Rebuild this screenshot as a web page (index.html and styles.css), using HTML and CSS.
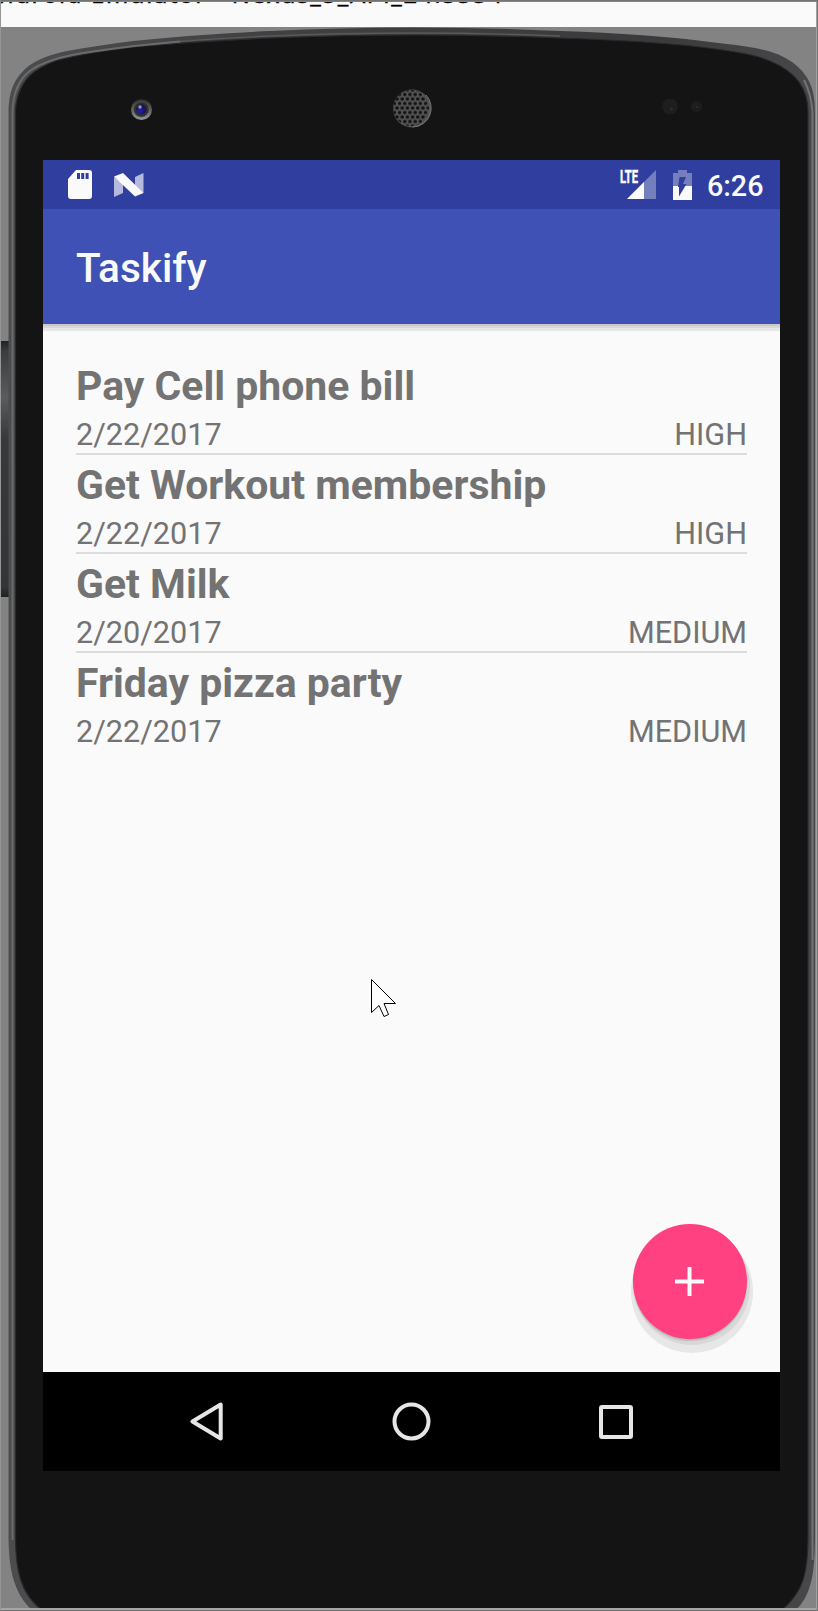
FILE: index.html
```html
<!DOCTYPE html>
<html lang="en">
<head>
<meta charset="utf-8">
<title>Taskify</title>
<link rel="stylesheet" href="styles.css">
</head>
<body>
<div class="window">
  <header class="titlebar">
    <svg width="816" height="25" viewBox="1 2 816 25"><text class="window-title" x="-18" y="3" textLength="520">Android Emulator - Nexus_5_API_24:5554</text></svg>
  </header>
  <main class="device">
    <svg class="shell" width="818" height="1584" viewBox="0 27 818 1584" aria-hidden="true">
      <defs>
        <linearGradient id="rim" x1="0" x2="1" y1="0" y2="0">
          <stop offset="0" stop-color="#4b4c4e"/><stop offset=".3" stop-color="#414143"/><stop offset=".8" stop-color="#3a3a3c"/><stop offset="1" stop-color="#48484b"/>
        </linearGradient>
        <linearGradient id="key" x1="0" x2="0" y1="0" y2="1">
          <stop offset="0" stop-color="#222"/><stop offset=".04" stop-color="#3b3c3d"/><stop offset=".22" stop-color="#5a5b5c"/><stop offset=".38" stop-color="#383939"/><stop offset=".96" stop-color="#343535"/><stop offset="1" stop-color="#202020"/>
        </linearGradient>
        <linearGradient id="lens" x1="0" x2="0" y1="0" y2="1"><stop offset="0" stop-color="#292929"/><stop offset="1" stop-color="#999"/></linearGradient>
        <pattern id="mesh" width="5.2" height="9" patternUnits="userSpaceOnUse" patternTransform="translate(410 103.5)">
          <circle cx="2.6" cy="4.5" r="1.8" fill="#111"/><circle cx="0" cy="0" r="1.8" fill="#111"/><circle cx="5.2" cy="0" r="1.8" fill="#111"/><circle cx="0" cy="9" r="1.8" fill="#111"/><circle cx="5.2" cy="9" r="1.8" fill="#111"/>
        </pattern>
      </defs>
      <rect x="1" y="341" width="9" height="256" fill="url(#key)"/>
      <path fill="url(#rim)" d="M8.500 1535V112C9 88 16 78 25 69C36 59 52 54 67 51C88 47 110 44 133 41Q200 34 270 31Q412 24 560 31Q650 34 710 42C755 47 775 50 792 62C808 74 815 87 815 112V1535C815 1575 811 1596 795 1611H33C14 1594 8.500 1570 8.500 1535Z"/>
      <path fill="#141414" stroke="#2a2a2c" stroke-width="1.2" d="M15.500 1535V110C17 90 25 79 34 72C44 65 56 60 67 58C88 53 110 50 133 47Q200 41 270 38Q412 32 560 38Q650 41 700 47C740 52 756 55 770 61C796 72 808 88 808 112V1535C808 1575 803 1592 781 1611H43C20 1594 15.500 1570 15.500 1535Z"/>
      <path fill="none" stroke="#6a6b6d" stroke-width="2" d="M12.500 1540V112C13 90 20 78 31 70C43 62 57 58 72 55C105 49 140 45 180 41.500"/>
      <path fill="none" stroke="#59595b" stroke-width="1.3" d="M180 41.500Q230 37.500 270 36Q412 30 560 36"/>
      <path fill="none" stroke="#737376" stroke-width="2" d="M812.500 1560V112Q811 93 804 80"/>
      <circle cx="141.500" cy="109.500" r="10.500" fill="url(#lens)"/>
      <circle cx="141.300" cy="109.300" r="7.800" fill="#303030" stroke="#666" stroke-width=".6"/>
      <circle cx="141.300" cy="109.300" r="5" fill="#171753"/><circle cx="140" cy="111" r="3" fill="#1e1ba8"/><circle cx="140" cy="107" r="1.700" fill="#9a9aae"/>
      <circle cx="412" cy="108.500" r="19" fill="#555"/>
      <circle cx="411" cy="108" r="18" fill="url(#mesh)"/>
      <path d="M426 95A19 19 0 0 1 413 127" fill="none" stroke="#777" stroke-width="1"/>
      <circle cx="670" cy="106.500" r="8" fill="#1e1e1e"/><circle cx="696.500" cy="106.500" r="5.500" fill="#1d1d1d"/>
      <circle cx="671.500" cy="109" r="1.200" fill="#3c2e2e"/><circle cx="697" cy="107" r="1" fill="#303030"/>
    </svg>
    <section class="screen">
      <div class="statusbar">
        <svg width="24" height="30" viewBox="0 0 24 30"><path fill="#fafafa" d="M8 0H21Q24 0 24 3V26Q24 29 21 29H3Q0 29 0 26V9Z"/><path fill="#303f9f" d="M9 3h3v6H9zM13.200 3h3v6h-3zM17.600 3h3v6h-3z"/></svg>
        <svg class="nougat" width="30" height="24" viewBox="0 0 30 24"><path fill="#b4bade" d="M0 4L9 10V20L0 24ZM21 4L29.500 0V20L21 15Z"/><path fill="#fafafa" d="M0 3.500L9 0L29.500 20L21 23.500Z"/></svg>
        <svg class="signal" width="38" height="30" viewBox="0 0 38 30"><path fill="#757fbd" d="M37 0V29H8Z"/><path fill="#fafafa" d="M25 12V29H8Z"/><path fill="#303f9f" d="M0 0H19V14H0Z"/><text x="1" y="13" textLength="18" lengthAdjust="spacingAndGlyphs" class="lte">LTE</text></svg>
        <svg class="battery" width="19" height="30" viewBox="0 0 19 30"><path fill="#757fbd" d="M5 0H14V3H19V16H0V3H5Z"/><path fill="#fafafa" d="M0 16H19V30H0Z"/><path fill="#303f9f" d="M6.500 7H13L10 14H13.500L6 26.500V17H5Z"/></svg>
        <span class="clock">6:26</span>
      </div>
      <div class="appbar"><h1>Taskify</h1></div>
      <ul class="tasks">
        <li><h2>Pay Cell phone bill</h2><div class="meta"><span>2/22/2017</span><span>HIGH</span></div></li>
        <li><h2>Get Workout membership</h2><div class="meta"><span>2/22/2017</span><span>HIGH</span></div></li>
        <li><h2>Get Milk</h2><div class="meta"><span>2/20/2017</span><span>MEDIUM</span></div></li>
        <li><h2>Friday pizza party</h2><div class="meta"><span>2/22/2017</span><span>MEDIUM</span></div></li>
      </ul>
      <svg class="cursor" width="26" height="40" viewBox="0 0 26 40"><path fill="#fff" stroke="#000" d="M.5 .5V33.500L8 26.500L13 37.500L17.500 35.500L13 24.500H24.500Z"/></svg>
      <button class="fab" aria-label="Add task"><svg width="29" height="29" viewBox="0 0 29 29"><path fill="#fafafa" d="M12.500 0h4v12.500H29v4H16.500V29h-4V16.500H0v-4h12.500z"/></svg></button>
      <nav class="navbar">
        <svg width="33" height="39" viewBox="0 0 33 39"><path d="M30.700 2.500V36.500L2.500 19.500Z"/></svg>
        <svg width="39" height="39" viewBox="0 0 39 39"><circle cx="19.500" cy="19.500" r="17"/></svg>
        <svg width="34" height="34" viewBox="0 0 34 34"><rect x="2" y="2" width="30" height="30" rx="1"/></svg>
      </nav>
    </section>
  </main>
</div>
</body>
</html>
```
FILE: styles.css
```css
* { box-sizing: border-box; }
body { margin: 0; background: #838383; font-family: Roboto, "Liberation Sans", sans-serif; }
.window {
  position: relative; width: 818px; height: 1611px; overflow: hidden;
  padding: 2px 1px; display: flex; flex-direction: column; background: #838383;
}
/* Frame of the emulator window */
.window::after {
  content: ""; position: absolute; inset: 0; pointer-events: none;
  border: 1px solid #737373; border-left-color: #969696;
  box-shadow: inset 0 1px #858585, inset -1px 0 #a0a0a0, inset 0 -2px #a5a5a5;
}
.titlebar { height: 25px; flex: none; overflow: hidden; background: #fafafa; }
.titlebar svg { display: block; }
.window-title { font: 24px "Open Sans", sans-serif; fill: #000; stroke: #000; stroke-width: .5; }
.device { flex: 1; padding: 133px 37px 0 42px; }
.shell { position: absolute; left: 0; top: 27px; }
.screen { position: relative; width: 737px; height: 1311px; display: flex; flex-direction: column; background: #fafafa; }
.statusbar { height: 49px; flex: none; display: flex; align-items: flex-start; padding: 10px 17px 0 25px; background: #303f9f; color: #fafafa; }
.nougat { margin: 3px 0 0 22px; }
.signal { margin-left: auto; }
.battery { margin: 0 15px 0 16px; }
.lte { font: bold 17.500px Roboto, sans-serif; fill: #fafafa; stroke: #fafafa; stroke-width: .5; }
.signal, .titlebar svg { overflow: visible; }
.clock { font-size: 28.700px; font-weight: 500; line-height: 32px; width: 56px; }
.appbar {
  height: 115px; flex: none; display: flex; align-items: center; padding: 3px 33px 0; background: #3f51b5; color: #fafafa;
  box-shadow: 0 2px #c9c9c9, 0 4px #d8d8d8, 0 7px #e7e7e7;
}
h1, h2 { margin: 0; }
h1 { font-size: 40.600px; line-height: 48px; font-weight: 500; }
.tasks { flex: 1; margin: 0; padding: 32px 33px 0; list-style: none; color: #737373; }
.tasks li { height: 99px; padding-top: 6px; border-bottom: 2px solid #dcdcdc; }
.tasks li:last-child { border-bottom: 0; }
h2 { font-size: 40.950px; line-height: 48px; font-weight: 700; }
.meta { display: flex; justify-content: space-between; font-size: 30.600px; line-height: 36px; margin-top: 6.500px; }
.cursor { position: absolute; left: 328px; top: 819px; }
.fab {
  position: absolute; left: 589.500px; top: 1064px; width: 114.500px; height: 115px; padding: 0; border: 0; border-radius: 50%;
  display: flex; align-items: center; justify-content: center; background: #ff4081;
  box-shadow: 0 2px 1px #bdbdbd, 2px 5px 0 1px #d8d8d8, 2px 10px 0 4px #e7e7e7;
}
.navbar { height: 99px; flex: none; display: flex; align-items: center; padding: 0 147px 0 147px; justify-content: space-between; background: #000; }
.navbar svg { fill: none; stroke: #e6e6e6; stroke-width: 4; stroke-linejoin: round; }
```
